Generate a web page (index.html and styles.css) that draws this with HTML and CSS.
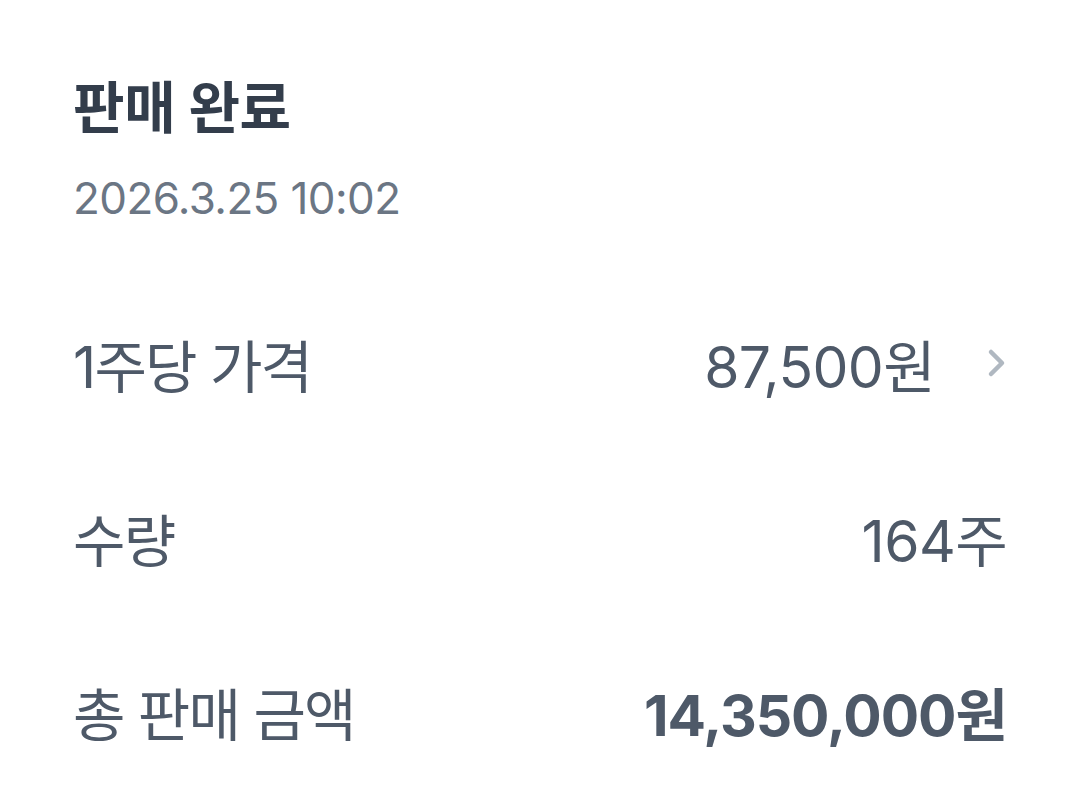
FILE: index.html
```html
<!DOCTYPE html>
<html lang="ko">
<head>
<meta charset="utf-8">
<link rel="stylesheet" href="styles.css">
</head>
<body>
<main class="sheet">
  <header class="head">
    <h1 class="title">판매 완료</h1>
    <p class="date">2026.3.25 10:02</p>
  </header>
  <ul class="rows">
    <li class="row">
      <span class="label">1주당 가격</span>
      <span class="value">87,500원<svg class="chev" viewBox="0 0 20 32" width="20" height="32"><path d="M4 5 L15 16 L4 27" fill="none" stroke="#b0b8c1" stroke-width="4.5" stroke-linecap="round" stroke-linejoin="round"/></svg></span>
    </li>
    <li class="row">
      <span class="label">수량</span>
      <span class="value">164주</span>
    </li>
    <li class="row">
      <span class="label">총 판매 금액</span>
      <span class="value strong">14,350,000원</span>
    </li>
  </ul>
</main>
</body>
</html>
```
FILE: styles.css
```css
html, body {
  margin: 0;
  padding: 0;
  background: #ffffff;
}
body {
  font-family: "Inter", "Noto Sans CJK KR", sans-serif;
  width: 1080px;
  height: 797px;
  overflow: hidden;
}
.sheet {
  padding: 75px 73px 0 73px;
}
.head {
  display: flex;
  flex-direction: column;
  gap: 32px;
}
.title {
  margin: 0;
  font-size: 56px;
  line-height: 66px;
  font-weight: 700;
  color: #333d4b;
  letter-spacing: -0.3px;
}
.date {
  margin: 0;
  font-size: 44px;
  line-height: 50px;
  color: #6b7684;
  letter-spacing: -0.6px;
}
.rows {
  list-style: none;
  margin: 108px 0 0;
  padding: 0;
  display: flex;
  flex-direction: column;
  gap: 110px;
}
.row {
  display: flex;
  justify-content: space-between;
  align-items: center;
  height: 64px;
  font-size: 57px;
  color: #4e5968;
  letter-spacing: -0.6px;
}
.label {
  letter-spacing: -1.8px;
}
.value {
  display: flex;
  align-items: center;
}
.chev {
  margin-left: 52px;
}
.strong {
  font-weight: 700;
  letter-spacing: -1px;
}
```
